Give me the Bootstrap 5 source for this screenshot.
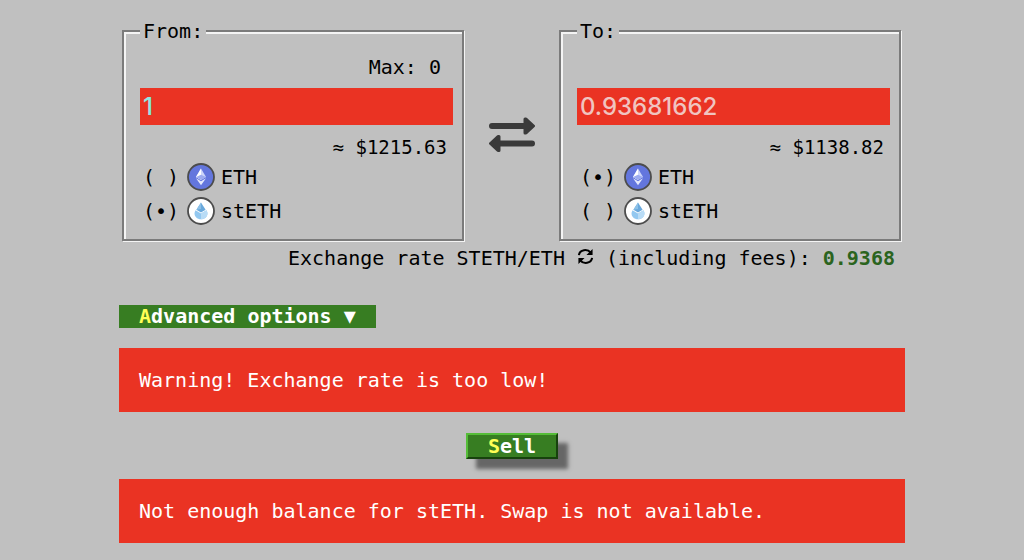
<!DOCTYPE html>
<html lang="en">
<head>
<meta charset="utf-8">
<meta name="viewport" content="width=device-width, initial-scale=1">
<title>Swap</title>
<link href="https://cdn.jsdelivr.net/npm/bootstrap@5.3.0/dist/css/bootstrap.min.css" rel="stylesheet">
<style>
  body { background: #c0c0c0; color: #000; font-family: "DejaVu Sans Mono", monospace; font-size: 20px; line-height: 24px; }
  .swap { max-width: 786px; padding-top: 19px; }
  .side { border: 2px solid #7b7b7b; box-shadow: inset 2px 2px #f4f4f4, 1px 1px #f4f4f4; padding: 0 9px 11px 16px; flex: 1 1 0; }
  .side legend { float: none; width: auto; margin: 0; padding: 0 3px; font-size: 20px; line-height: 24px; background: #c0c0c0; }
  .side legend + * { clear: none; }
  .pair { gap: 95px; padding: 0 4px 0 3px; }
  .limit { height: 24px; margin: 12px 12px 9px 0; }
  .amount { height: 37px; padding: 0 3px; border: 0; border-radius: 0; background: #ea3323; color: #8ce8e4; font-family: Inter, sans-serif; font-size: 24px; font-weight: 500; }
  .amount[readonly] { color: #f0c4c0; }
  .worth { font-size: 19px; line-height: 24px; margin: 10px 6px 1px 0; }
  .coin { height: 34px; padding-left: 3px; }
  .coin input { appearance: none; margin: 0; width: 36px; font: inherit; }
  .coin input::before { content: "( )"; white-space: pre; }
  .coin input:checked::before { content: "(•)"; }
  .coin svg { width: 28px; height: 28px; margin: 0 6px 0 8px; }
  .flip { left: 50%; top: 50%; margin-top: 5px; }
  .rate { padding-right: 10px; margin-top: 5px; }
  .rate strong { color: #2b641e; }
  .rate svg { vertical-align: 0; }
  .key { color: #ffff55; }
  .options, .sell { background: #377d22; color: #fff; font-size: 20px; font-weight: 700; padding: 0 20px; }
  .options { line-height: 23px; margin: 35px 0 20px; }
  .notice { background: #ea3323; color: #fff; border: 0; border-radius: 0; padding: 20px; margin: 0; }
  .sell { line-height: 22px; margin: 21px auto 20px; border: 2px solid; border-color: #55bd38 #17420d #17420d #55bd38; box-shadow: 10px 10px 4px #666; }
</style>
</head>
<body>
<svg class="d-none">
  <symbol id="eth" viewBox="0 0 28 28">
    <circle cx="14" cy="14" r="13" fill="#6376dd" stroke="#4c4c4c" stroke-width="1.8"/>
    <path d="M14 5.5 19 14l-5 3-5-3z" fill="#cdd6fa"/><path d="M14 5.5V17l-5-3z" fill="#fff"/>
    <path d="m9 15.2 5 3 5-3-5 7z" fill="#e4e9fd"/><path d="m9 14 5-2.2 5 2.2-5 3z" fill="#9dacf0"/>
  </symbol>
  <symbol id="steth" viewBox="0 0 28 28">
    <circle cx="14" cy="14" r="13" fill="#fff" stroke="#4c4c4c" stroke-width="1.8"/>
    <path d="m14 5.5 4.6 7.2L14 15.5l-4.600-2.800z" fill="#6aa9dc"/><path d="M14 5.500V12l-4.600.7z" fill="#8cc1e8"/>
    <path d="M8.500 13.300 14 16.600l5.500-3.300c1.600 2.600 1.200 5.200-.5 7-2.700 2.700-7.300 2.700-10 0-1.700-1.800-2.100-4.400-.5-7z" fill="#93c8f0"/><path d="M14 16.600l5.500-3.300c1.600 2.600 1.200 5.200-.5 7a7 7 0 0 1-5 2z" fill="#b9dcf6"/>
  </symbol>
</svg>
<main class="swap container-fluid px-0">
  <form>
    <div class="pair d-flex position-relative">
      <fieldset class="side">
        <legend>From:</legend>
        <div class="limit text-end">Max: 0</div>
        <input class="amount form-control" type="text" value="1" aria-label="Amount to sell">
        <div class="worth text-end">≈ $1215.63</div>
        <label class="coin d-flex align-items-center"><input type="radio" name="from"><svg aria-hidden="true"><use href="#eth"/></svg>ETH</label>
        <label class="coin d-flex align-items-center"><input type="radio" name="from" checked><svg aria-hidden="true"><use href="#steth"/></svg>stETH</label>
      </fieldset>
      <button type="button" class="flip btn p-0 border-0 position-absolute translate-middle" aria-label="Swap direction">
        <svg class="d-block" width="48" height="38" viewBox="0 0 48 38" fill="none" stroke="#3a3a3a" stroke-width="6" stroke-linecap="round" stroke-linejoin="round"><path d="M4 10h34M44 27.500H12"/><path d="M37 3v14h1l7.500-7-7.500-7zM11 20.500v14h-1l-7.500-7 7.500-7z" fill="#3a3a3a" stroke-width="3"/></svg>
      </button>
      <fieldset class="side">
        <legend>To:</legend>
        <div class="limit"></div>
        <input class="amount form-control" type="text" value="0.93681662" aria-label="Amount to receive" readonly>
        <div class="worth text-end">≈ $1138.82</div>
        <label class="coin d-flex align-items-center"><input type="radio" name="to" checked><svg aria-hidden="true"><use href="#eth"/></svg>ETH</label>
        <label class="coin d-flex align-items-center"><input type="radio" name="to"><svg aria-hidden="true"><use href="#steth"/></svg>stETH</label>
      </fieldset>
    </div>
    <div class="rate text-end">Exchange rate STETH/ETH <svg width="17" height="17" viewBox="0 0 18 18" fill="none" stroke="#000" stroke-width="2.200" aria-hidden="true"><path d="M2 7.500C3 1.500 11 .500 14.500 5M16 10.500C15 16.500 7 17.500 3.500 13"/><path d="M16.500 1v6.500H10zM1.500 17v-6.500H8z" fill="#000" stroke="none"/></svg> (including fees): <strong>0.9368</strong></div>
    <button type="button" class="options btn rounded-0 border-0 d-block"><span class="key">A</span>dvanced options ▼</button>
    <div class="notice alert" role="alert">Warning! Exchange rate is too low!</div>
    <button type="submit" class="sell btn rounded-0 d-block"><span class="key">S</span>ell</button>
    <div class="notice alert" role="alert">Not enough balance for stETH. Swap is not available.</div>
  </form>
</main>
<script src="https://cdn.jsdelivr.net/npm/bootstrap@5.3.0/dist/js/bootstrap.bundle.min.js"></script>
</body>
</html>
